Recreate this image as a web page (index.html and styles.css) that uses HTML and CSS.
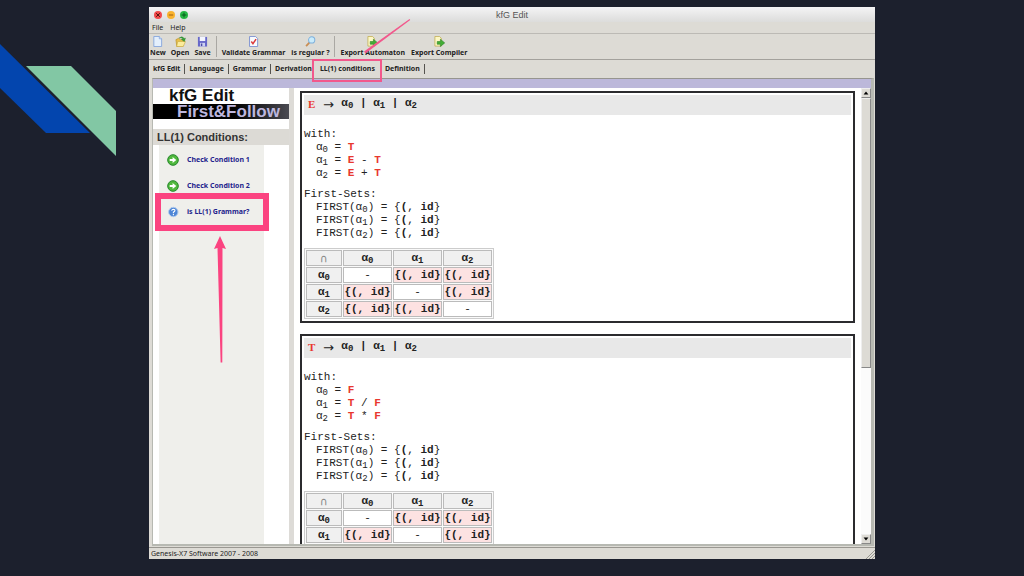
FILE: index.html
```html
<!DOCTYPE html>
<html lang="en">
<head>
<meta charset="utf-8">
<title>kfG Edit</title>
<link rel="stylesheet" href="styles.css">
</head>
<body>
<div class="slide">
  <svg class="ribbons" width="116" height="160" viewBox="0 0 116 160" aria-hidden="true">
    <path d="M0 44 90 133H46L0 88Z" fill="#0345ae"/>
    <path d="M26 66H71L116 111V156Z" fill="#82c7a4"/>
  </svg>

  <div class="window">
    <header class="titlebar">
      <div class="lights">
        <button class="light red" aria-label="Close"><svg viewBox="0 0 8 8"><path d="M2.2 2.2 5.8 5.8M5.8 2.2 2.2 5.8"/></svg></button>
        <button class="light amber" aria-label="Minimize"><svg viewBox="0 0 8 8"><path d="M1.8 4H6.2"/></svg></button>
        <button class="light green" aria-label="Zoom"><svg viewBox="0 0 8 8"><path d="M1.6 4H6.4M4 1.6V6.4"/></svg></button>
      </div>
      <span class="title">kfG Edit</span>
    </header>

    <nav class="menubar">
      <button>File</button>
      <button>Help</button>
    </nav>

    <div class="toolbar">
      <div class="group">
        <button><svg viewBox="0 0 12 12"><path d="M2 .5H8L10.5 3V11.5H2Z" fill="#e4effc" stroke="#86a5dc"/><path d="M8 .5V3H10.5" fill="#fff" stroke="#86a5dc"/></svg>New</button>
        <button><svg viewBox="0 0 12 12"><path d="M1 4 4 2.5 6 4 10 4 9 11 2 11.5Z" fill="#e8c04a" stroke="#b58d22" stroke-width=".7"/><path d="M3 6H11.5L9 11.5H1.8Z" fill="#fbec9c" stroke="#c7a63a" stroke-width=".6"/><path d="M4.5 2.2Q8-.6 10 2.6L11.4 2.2 10.3 6 7 3.7 8.5 3.3Q7 1.4 4.5 2.2Z" fill="#36a536" stroke="#23752b" stroke-width=".4"/></svg>Open</button>
        <button><svg viewBox="0 0 12 12"><path d="M1 1H11V11.5H1Z" fill="#6768c9"/><path d="M3 1H9V5.5H3Z" fill="#f3f5ff"/><path d="M3.3 7.5H8.7V11.5H3.3Z" fill="#cdd2f1"/><path d="M4.2 8.2H5.8V11H4.2Z" fill="#4a4ba5"/></svg>Save</button>
      </div>
      <div class="group">
        <button><svg viewBox="0 0 12 12"><path d="M1.7 .5H8.2L10.5 2.8V11.5H1.7Z" fill="#f8fbff" stroke="#7b8fd0"/><path d="M3.6 6 5.4 8.4 8.8 3.4" fill="none" stroke="#dc3a3a" stroke-width="1.6"/></svg>Validate Grammar</button>
        <button><svg viewBox="0 0 12 12"><path d="M5 7 1.2 11" stroke="#c98e54" stroke-width="2"/><circle cx="7.3" cy="4.3" r="3.4" fill="#c9ebfb" stroke="#7db0dc" stroke-width="1.1"/></svg>is regular ?</button>
      </div>
      <div class="group">
        <button><svg viewBox="0 0 12 12"><path d="M1 .5H6L8 2.5V11H1Z" fill="#fdf8c5" stroke="#bda94a" stroke-width=".8"/><path d="M3.5 6H7V3.5L11.7 7.5 7 11.5V9H3.5Z" fill="#42ad35" stroke="#277c24" stroke-width=".6"/></svg>Export Automaton</button>
        <button><svg viewBox="0 0 12 12"><path d="M1 .5H6L8 2.5V11H1Z" fill="#fdf8c5" stroke="#bda94a" stroke-width=".8"/><path d="M3.5 6H7V3.5L11.7 7.5 7 11.5V9H3.5Z" fill="#42ad35" stroke="#277c24" stroke-width=".6"/></svg>Export Compiler</button>
      </div>
    </div>

    <div class="tabs" role="tablist">
      <button role="tab">kfG Edit</button>
      <button role="tab">Language</button>
      <button role="tab">Grammar</button>
      <button role="tab" class="before-active">Derivation</button>
      <button role="tab" class="active" aria-selected="true">LL(1) conditions
        <svg class="pointer-line" width="48" height="36" viewBox="0 0 48 36" aria-hidden="true"><path d="M0 32.5 45.5 0 46.2 1 1.4 34.5Z" fill="#f2588c"/></svg>
      </button>
      <button role="tab">Definition</button>
    </div>

    <div class="frame">
      <div class="strip"></div>
      <div class="panes">
        <aside class="sidebar">
          <div class="logo">
            <div class="logo-top">kfG Edit</div>
            <div class="logo-bottom">First&amp;Follow</div>
          </div>
          <h1>LL(1) Conditions:</h1>
          <ul class="checks">
            <li><a href="#c1"><svg viewBox="0 0 12 12"><circle cx="6" cy="6" r="5.3" fill="#50b83d" stroke="#24872a"/><path d="M2.7 5H5.6V2.9L9.3 6 5.6 9.1V7H2.7Z" fill="#fff"/></svg>Check Condition 1</a></li>
            <li><a href="#c2"><svg viewBox="0 0 12 12"><circle cx="6" cy="6" r="5.3" fill="#50b83d" stroke="#24872a"/><path d="M2.7 5H5.6V2.9L9.3 6 5.6 9.1V7H2.7Z" fill="#fff"/></svg>Check Condition 2</a></li>
            <li class="marked"><a href="#ll1"><svg viewBox="0 0 12 12"><circle cx="6.3" cy="6" r="4.7" fill="#4e86d6" stroke="#b2cbed"/><path d="M4.7 4.7Q4.9 3.2 6.4 3.2 8 3.3 7.9 4.6 7.8 5.4 6.4 6.3V7.2M6.4 8.1V9.2" fill="none" stroke="#fff" stroke-width="1.1"/></svg>is LL(1) Grammar?</a>
              <svg class="pointer-arrow" width="14" height="128" viewBox="0 0 14 128" aria-hidden="true"><path d="M7 0 13 13 9.5 12 9.3 126.5H7.6L4.5 12 1 13Z" fill="#fb4380"/></svg>
            </li>
          </ul>
        </aside>
        <div class="divider"></div>
        <main class="rules">
          <section class="card">
            <h2><span class="nt">E</span><span class="arrow">→</span><span>α<sub>0</sub> | α<sub>1</sub> | α<sub>2</sub></span></h2>
            <div class="block">
              <p>with:</p>
              <p class="in">α<sub>0</sub> = <b>T</b></p>
              <p class="in">α<sub>1</sub> = <b>E</b> - <b>T</b></p>
              <p class="in">α<sub>2</sub> = <b>E</b> + <b>T</b></p>
            </div>
            <div class="block">
              <p>First-Sets:</p>
              <p class="in">FIRST(α<sub>0</sub>) = {<strong>(</strong>, <strong>id</strong>}</p>
              <p class="in">FIRST(α<sub>1</sub>) = {<strong>(</strong>, <strong>id</strong>}</p>
              <p class="in">FIRST(α<sub>2</sub>) = {<strong>(</strong>, <strong>id</strong>}</p>
            </div>
            <table>
              <tr><th class="corner">∩</th><th>α<sub>0</sub></th><th>α<sub>1</sub></th><th>α<sub>2</sub></th></tr>
              <tr><th>α<sub>0</sub></th><td>-</td><td class="hit">{(, id}</td><td class="hit">{(, id}</td></tr>
              <tr><th>α<sub>1</sub></th><td class="hit">{(, id}</td><td>-</td><td class="hit">{(, id}</td></tr>
              <tr><th>α<sub>2</sub></th><td class="hit">{(, id}</td><td class="hit">{(, id}</td><td>-</td></tr>
            </table>
          </section>
          <section class="card">
            <h2><span class="nt">T</span><span class="arrow">→</span><span>α<sub>0</sub> | α<sub>1</sub> | α<sub>2</sub></span></h2>
            <div class="block">
              <p>with:</p>
              <p class="in">α<sub>0</sub> = <b>F</b></p>
              <p class="in">α<sub>1</sub> = <b>T</b> / <b>F</b></p>
              <p class="in">α<sub>2</sub> = <b>T</b> * <b>F</b></p>
            </div>
            <div class="block">
              <p>First-Sets:</p>
              <p class="in">FIRST(α<sub>0</sub>) = {<strong>(</strong>, <strong>id</strong>}</p>
              <p class="in">FIRST(α<sub>1</sub>) = {<strong>(</strong>, <strong>id</strong>}</p>
              <p class="in">FIRST(α<sub>2</sub>) = {<strong>(</strong>, <strong>id</strong>}</p>
            </div>
            <table>
              <tr><th class="corner">∩</th><th>α<sub>0</sub></th><th>α<sub>1</sub></th><th>α<sub>2</sub></th></tr>
              <tr><th>α<sub>0</sub></th><td>-</td><td class="hit">{(, id}</td><td class="hit">{(, id}</td></tr>
              <tr><th>α<sub>1</sub></th><td class="hit">{(, id}</td><td>-</td><td class="hit">{(, id}</td></tr>
            </table>
          </section>
        </main>
        <div class="scrollbar">
          <button aria-label="Scroll up"><svg viewBox="0 0 10 10"><path d="M5 3 8 7H2Z"/></svg></button>
          <div class="track"><div class="thumb"></div></div>
          <button aria-label="Scroll down"><svg viewBox="0 0 10 10"><path d="M5 7 8 3H2Z"/></svg></button>
        </div>
      </div>
    </div>

    <footer class="status"><span>Genesis-X7 Software 2007 - 2008</span>
      <svg viewBox="0 0 10 10" aria-hidden="true"><path d="M1 10 10 1M4 10 10 4M7 10 10 7" stroke="#96968f" fill="none"/></svg>
    </footer>
  </div>
</div>
</body>
</html>
```
FILE: styles.css
```css
* { box-sizing: border-box; }

body {
  margin: 0;
  background: #1c202d;
  color: #222;
  font-family: "Liberation Sans", Arial, sans-serif;
}

button {
  border: 0;
  margin: 0;
  padding: 0;
  background: none;
  color: inherit;
  font: inherit;
}

svg { display: block; }

.slide {
  position: relative;
  display: flex;
  height: 100vh;
  padding: 7px 149px 17px;
}

.ribbons {
  position: absolute;
  left: 0;
  top: 0;
}

.window {
  flex: 1;
  min-width: 0;
  display: flex;
  flex-direction: column;
  background: #dddbd5;
}

/* Title bar and menu */
.titlebar {
  display: grid;
  grid-template-columns: 1fr auto 1fr;
  align-items: center;
  height: 15px;
  padding: 0 5px;
  background: linear-gradient(#f4f4f5, #dcdcdb);
}

.lights { display: flex; gap: 5px; }

.light {
  width: 8px;
  height: 8px;
  border-radius: 50%;
}

.light svg { width: 8px; height: 8px; fill: none; stroke: #4d1a10; }
.light.red { background: #f2494b; }
.light.amber { background: #f9b32f; }
.light.amber svg { stroke: #a06010; }
.light.green { background: #27b843; }
.light.green svg { stroke: #07591c; }

.title { font-size: 9px; line-height: 14px; color: #555; }

.menubar {
  display: flex;
  gap: 7px;
  height: 12px;
  padding: 0 3px;
  border-bottom: 1px solid #bcbab5;
  font: 7px/11px "Noto Sans", sans-serif;
}

/* Toolbar */
.toolbar {
  display: flex;
  height: 26px;
  border-bottom: 1px solid #a3a19c;
  font: bold 7px/9px "Noto Sans", sans-serif;
  white-space: nowrap;
}

.group {
  display: flex;
  gap: 5px;
  margin: 2px 0;
  padding: 0 5px 0 1px;
}

.group + .group {
  gap: 6px;
  padding-left: 5px;
  border-left: 1px solid #aaa8a3;
}

.group button {
  display: flex;
  flex-direction: column;
  align-items: center;
  gap: 1px;
}

.group svg { width: 11px; height: 11px; }

/* Tabs */
.tabs {
  display: flex;
  align-items: flex-start;
  height: 16px;
  padding: 4px 0 0;
  font: bold 7px/10px "Noto Sans", sans-serif;
  white-space: nowrap;
}

.tabs button {
  padding: 0 4px;
  border-right: 1px solid #55534f;
}

.tabs .before-active { border-right: 0; }

.tabs .active {
  position: relative;
  padding: 0 5px 0 4px;
}

.tabs .active::after {
  content: "";
  position: absolute;
  inset: -5px -2px -8px -4px;
  border: 2px solid #f2588c;
}

.pointer-line {
  position: absolute;
  left: 48px;
  top: -45px;
  z-index: 1;
}

/* Main frame */
.frame {
  flex: 1;
  min-height: 0;
  display: flex;
  flex-direction: column;
  margin: 2px 1px 1px 3px;
  border: 2px solid #b7b9b2;
  border-width: 1px 3px 2px 1px;
  border-top-color: #96958f;
}

.strip { height: 9px; flex: none; background: #bcb8da; }

.panes {
  flex: 1;
  min-height: 0;
  display: flex;
  background: #fff;
}

.sidebar {
  flex: none;
  display: flex;
  flex-direction: column;
  width: 136px;
}

.logo {
  padding-bottom: 10px;
  font-size: 17px;
  font-weight: bold;
  line-height: 15px;
}

.logo-top { padding-left: 16px; color: #111; line-height: 16px; }

.logo-bottom {
  padding-left: 24px;
  background: linear-gradient(90deg, #000 60%, #4a4a52);
  color: #bcb6de;
}

.sidebar h1 {
  margin: 0;
  padding-left: 4px;
  background: #dcdad5;
  color: #333;
  font-size: 11px;
  line-height: 16px;
}

.checks {
  flex: 1;
  width: 105px;
  margin: 0 0 0 6px;
  padding: 2px 0 0;
  background: #efefeb;
  list-style: none;
}

.checks li { position: relative; height: 26px; }

.checks a {
  display: flex;
  align-items: center;
  gap: 8px;
  height: 26px;
  padding-left: 8px;
  color: #23238c;
  font: bold 7px/10px "Noto Sans", sans-serif;
  text-decoration: none;
  white-space: nowrap;
}

.checks a svg { width: 12px; height: 12px; }

.marked::after {
  content: "";
  position: absolute;
  inset: -6px -5px -6px -4px;
  border: 6px solid #fb4380;
}

.pointer-arrow {
  position: absolute;
  left: 54px;
  top: 37px;
}

.divider { flex: none; width: 5px; background: #dddbd7; }

.rules {
  flex: 1;
  min-width: 0;
  overflow: hidden;
  padding: 3px 6px 0;
  font: 11px/13px "Liberation Mono", monospace;
}

.card {
  margin-bottom: 11px;
  padding: 2px;
  border: 2px solid #2b2b2e;
}

.card h2 {
  display: flex;
  gap: 5px;
  margin: 0 0 13px;
  padding: 2px 4px 4px;
  background: #e8e8e8;
  font-size: 11px;
  line-height: 13px;
}

.card .nt, .card b { color: #e8372f; }
.card .nt { padding-top: 1px; font-family: "Liberation Serif", serif; }
.card .arrow { width: 16px; padding-top: 1px; text-align: center; font: 13px/13px "DejaVu Sans", sans-serif; }

.block { margin-bottom: 8px; }
.block p { margin: 0; }
.block .in { padding-left: 12px; }

sub {
  font-size: 9px;
  line-height: 1px;
  vertical-align: -2px;
}

table {
  border: 1px solid #ccc;
  border-spacing: 1px;
  background: #fafafa;
}

th, td {
  width: 49px;
  height: 16px;
  padding: 0;
  border: 1px solid #bbb;
  background: #fff;
  line-height: 13px;
  text-align: center;
}

th { background: #f0f0f0; }
th:first-child { width: 36px; }
.card .corner { color: #888; font: 11px/13px "DejaVu Sans", sans-serif; }
.hit { background: #fde2e2; font-weight: bold; }

.scrollbar {
  flex: none;
  display: flex;
  flex-direction: column;
  width: 10px;
  background: #fbfbfb;
}

.scrollbar button {
  height: 10px;
  background: #dddbd5;
  border: 1px solid #eee;
  border-right-color: #888;
  border-bottom-color: #888;
}

.track { flex: 1; }

.thumb {
  height: 62%;
  background: #dddbd5;
  border: 1px solid #eee;
  border-right-color: #888;
  border-bottom-color: #888;
}

.status {
  display: flex;
  justify-content: space-between;
  align-items: center;
  height: 12px;
  padding-left: 2px;
  border-top: 1px solid #999791;
  font: 7px/10px "Noto Sans", sans-serif;
}

.status svg { width: 10px; height: 10px; }
```
